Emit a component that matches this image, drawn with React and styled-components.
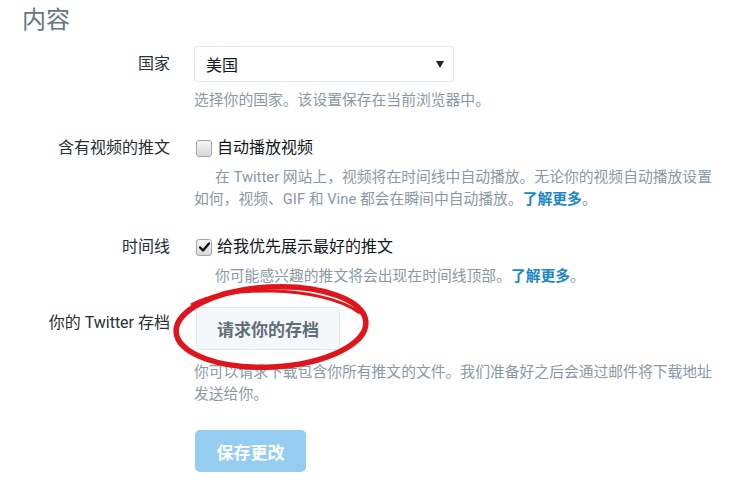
import styled, { createGlobalStyle } from 'styled-components'

const GlobalStyle = createGlobalStyle`
  body {
    margin: 0;
    background: #fff;
    font-family: Roboto, "Noto Sans CJK SC", sans-serif;
    color: #292f33;
  }
`

const Page = styled('div')`
  width: 740px;
  height: 500px;
  overflow: hidden;
  padding-top: 4px;
  box-sizing: border-box;
`

const Heading = styled('h2')`
  margin: 0 0 0 22px;
  font-size: 24px;
  line-height: 32px;
  font-weight: 400;
  color: #66757f;
`

const Row = styled('div')`
  display: grid;
  grid-template-columns: 170px 1fr;
  column-gap: 24px;
  align-items: start;
  margin-top: ${(p) => p.$top}px;
`

const Label = styled('div')`
  text-align: right;
  font-size: 16px;
  line-height: ${(p) => p.$lh}px;
  color: #292f33;
`

const Field = styled('div')`
  display: flex;
  flex-direction: column;
  align-items: flex-start;
  padding-right: 24px;
`

const Select = styled('div')`
  width: 260px;
  height: 36px;
  box-sizing: border-box;
  border: 1px solid #e1e8ed;
  border-radius: 4px;
  display: flex;
  align-items: center;
  justify-content: space-between;
  padding: 0 9px 0 11px;
  font-size: 16px;
  color: #14171a;
`

const Arrow = styled('span')`
  width: 0;
  height: 0;
  border-left: 4px solid transparent;
  border-right: 4px solid transparent;
  border-top: 7px solid #222;
`

const Help = styled('p')`
  margin: ${(p) => p.$gap}px 0 0;
  font-size: 14.8px;
  line-height: 22px;
  color: #8899a6;
  text-indent: ${(p) => (p.$indent ? '21px' : '0')};
`

const Link = styled('a')`
  color: #1b87c3;
  font-weight: 700;
  text-decoration: none;
`

const Check = styled('label')`
  display: flex;
  align-items: center;
  gap: 5px;
  font-size: 16px;
  line-height: 24px;
  color: #14171a;
`

const Box = styled('span')`
  width: 16px;
  height: 17px;
  margin-left: 2px;
  box-sizing: border-box;
  border: 1px solid #a6a6a6;
  border-radius: 3px;
  background: linear-gradient(#f6f6f6, #d8d8d8);
  display: flex;
  align-items: center;
  justify-content: center;
`

const ArchiveWrap = styled('div')`
  position: relative;
  margin-left: 2px;
`

const ArchiveButton = styled('button')`
  width: 144px;
  height: 43px;
  border: 1px solid #e1e8ed;
  border-radius: 4px;
  background: #f5f8fa;
  color: #5f6e78;
  font-family: inherit;
  font-size: 17px;
  font-weight: 700;
  cursor: pointer;
`

const Circle = styled('svg')`
  position: absolute;
  left: -25px;
  top: -25px;
  pointer-events: none;
`

const SaveButton = styled('button')`
  width: 111px;
  height: 42px;
  margin-left: 1px;
  border: none;
  border-radius: 5px;
  background: #95cdf1;
  color: #fff;
  font-family: inherit;
  font-size: 17px;
  font-weight: 700;
`

const App = () => {
  return (
    <Page>
      <GlobalStyle />
      <Heading>内容</Heading>

      <Row $top={10}>
        <Label $lh={36}>国家</Label>
        <Field>
          <Select>
            <span>美国</span>
            <Arrow />
          </Select>
          <Help $gap={7}>选择你的国家。该设置保存在当前浏览器中。</Help>
        </Field>
      </Row>

      <Row $top={25}>
        <Label $lh={24}>含有视频的推文</Label>
        <Field>
          <Check>
            <Box />
            自动播放视频
          </Check>
          <Help $gap={6} $indent>
            在 Twitter 网站上，视频将在时间线中自动播放。无论你的视频自动播放设置如何，视频、GIF 和 Vine 都会在瞬间中自动播放。<Link href='#'>了解更多</Link>。
          </Help>
        </Field>
      </Row>

      <Row $top={25}>
        <Label $lh={24}>时间线</Label>
        <Field>
          <Check>
            <Box>
              <svg width='11' height='10' viewBox='0 0 11 10'>
                <path d='M1 5.5 L4 8.5 L10 1.5' fill='none' stroke='#111' strokeWidth='2.4' strokeLinecap='round' strokeLinejoin='round' />
              </svg>
            </Box>
            给我优先展示最好的推文
          </Check>
          <Help $gap={6} $indent>
            你可能感兴趣的推文将会出现在时间线顶部。<Link href='#'>了解更多</Link>。
          </Help>
        </Field>
      </Row>

      <Row $top={20}>
        <Label $lh={32}>你的 Twitter 存档</Label>
        <Field>
          <ArchiveWrap>
            <ArchiveButton>请求你的存档</ArchiveButton>
            <Circle width='202' height='92' viewBox='0 0 202 92'>
              <ellipse cx='100' cy='45' rx='95' ry='40' fill='none' stroke='#e0141b' strokeWidth='5.5' transform='rotate(-3 100 45)' />
              <path d='M20 23 C 50 4, 150 2, 189 31' fill='none' stroke='#e0141b' strokeWidth='3' />
            </Circle>
          </ArchiveWrap>
          <Help $gap={11}>你可以请求下载包含你所有推文的文件。我们准备好之后会通过邮件将下载地址发送给你。</Help>
        </Field>
      </Row>

      <Row $top={25}>
        <div />
        <Field>
          <SaveButton>保存更改</SaveButton>
        </Field>
      </Row>
    </Page>
  )
}

export default App
